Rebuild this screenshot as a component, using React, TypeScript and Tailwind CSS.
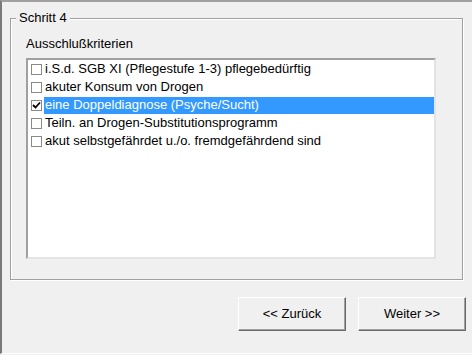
import React from "react";

const items = [
  { label: "i.S.d. SGB XI (Pflegestufe 1-3) pflegebedürftig", checked: false, selected: false },
  { label: "akuter Konsum von Drogen", checked: false, selected: false },
  { label: "eine Doppeldiagnose (Psyche/Sucht)", checked: true, selected: true },
  { label: "Teiln. an Drogen-Substitutionsprogramm", checked: false, selected: false },
  { label: "akut selbstgefährdet u./o. fremdgefährdend sind", checked: false, selected: false },
];

function CheckBox({ checked }: { checked: boolean }) {
  return (
    <span className="flex h-[11px] w-[11px] shrink-0 items-center justify-center border border-[#8a8a8a] bg-white">
      {checked && (
        <svg width="9" height="9" viewBox="0 0 9 9">
          <path d="M1 4 L3.5 6.5 L8 1.5" fill="none" stroke="#000" strokeWidth="1.8" />
        </svg>
      )}
    </span>
  );
}

function WinButton({ children }: { children: React.ReactNode }) {
  return (
    <button className="flex h-[34px] w-[108px] items-center justify-center border border-t-white border-l-white border-b-[#696969] border-r-[#696969] bg-[#f0f0f0] text-[13px] text-black shadow-[inset_-1px_-1px_0_#a0a0a0]">
      {children}
    </button>
  );
}

export default function App() {
  return (
    <div
      className="h-[355px] w-[472px] overflow-hidden bg-[#f0f0f0] text-[13px] text-black"
      style={{ fontFamily: '"Liberation Sans", Arial, sans-serif' }}
    >
      <div className="h-[354px] border-t-2 border-l-2 border-b border-t-[#a0a0a0] border-l-[#7a7a7a] border-b-white">
        {/* Schritt 4 group */}
        <div className="relative ml-[8px] mt-[16px] h-[262px] w-[453px] border border-[#a0a0a0] shadow-[1px_1px_0_#fff,inset_1px_1px_0_#fff]">
          <span className="absolute left-[5px] top-[-9px] bg-[#f0f0f0] px-[3px] leading-[16px]">Schritt 4</span>
          <div className="pl-[15px] pt-[17px]">
            <div className="leading-[16px]">Ausschlußkriterien</div>
            <div className="mt-[6px] h-[201px] w-[410px] border-2 border-t-[#a0a0a0] border-l-[#a0a0a0] border-b-[#e3e3e3] border-r-[#e3e3e3] bg-white pt-[0px]">
              {items.map((item) => (
                <div key={item.label} className="flex h-[18px] items-center pl-[3px]">
                  <CheckBox checked={item.checked} />
                  <span
                    className={
                      item.selected
                        ? "ml-[2px] flex h-[17px] flex-1 items-center bg-[#3399ff] pl-[1px] text-white"
                        : "ml-[2px] flex h-[17px] flex-1 items-center pl-[1px]"
                    }
                  >
                    {item.label}
                  </span>
                </div>
              ))}
            </div>
          </div>
        </div>

        <div className="mt-[17px] flex justify-end gap-[12px] pr-[6px]">
          <WinButton>&lt;&lt; Zurück</WinButton>
          <WinButton>Weiter &gt;&gt;</WinButton>
        </div>
      </div>
    </div>
  );
}
